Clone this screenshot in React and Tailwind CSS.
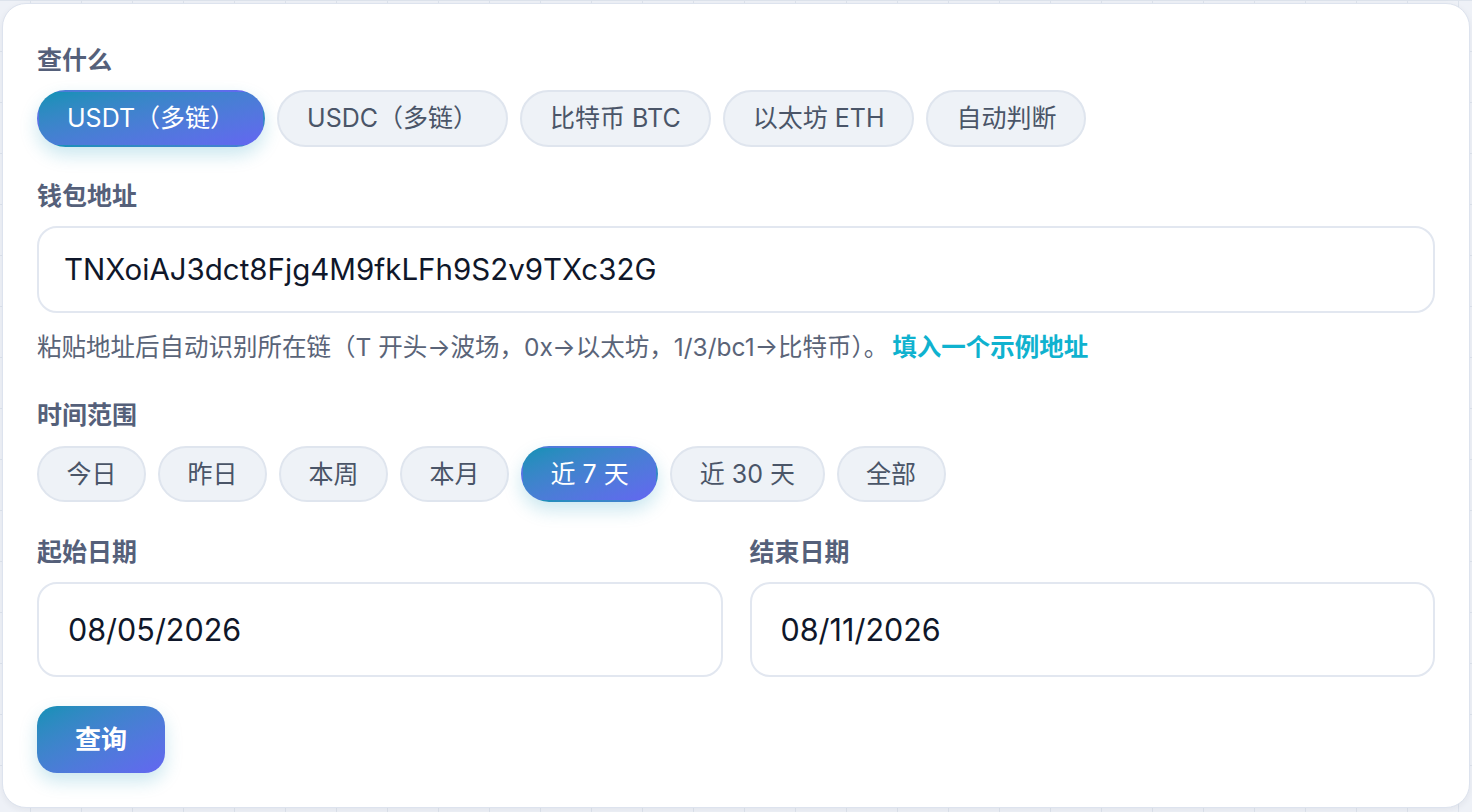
import React, { useState } from "react";

const FONT = "font-['Inter','Noto_Sans_CJK_SC',sans-serif]";

const assets = ["USDT（多链）", "USDC（多链）", "比特币 BTC", "以太坊 ETH", "自动判断"];
const ranges = ["今日", "昨日", "本周", "本月", "近 7 天", "近 30 天", "全部"];

function Pill({ active, children, tall }) {
  const base =
    "flex items-center justify-center rounded-full border-2 text-[25px] leading-none whitespace-nowrap " +
    (tall ? "h-[57px] px-[28px] " : "h-[56px] px-[27.5px] ");
  if (active) {
    return (
      <button
        className={
          base +
          "border-transparent text-white bg-gradient-to-br from-[#0e91b6] to-[#6366f1] shadow-[0_8px_18px_rgba(14,145,182,0.22)]"
        }
      >
        {children}
      </button>
    );
  }
  return (
    <button className={base + "border-[#dfe5ee] bg-[#eef2f7] text-[#4a5568]"}>
      {children}
    </button>
  );
}

function Label({ children, className = "" }) {
  return (
    <div className={"h-[32px] text-[25px] leading-[32px] font-semibold text-[#55607a] " + className}>
      {children}
    </div>
  );
}

export default function App() {
  const [asset, setAsset] = useState(0);
  const [range, setRange] = useState(4);

  return (
    <div
      className={
        FONT +
        " relative h-[812px] w-[1472px] overflow-hidden bg-[#eef1f7] bg-[linear-gradient(to_right,#dde3ec_1px,transparent_1px),linear-gradient(to_bottom,#dde3ec_1px,transparent_1px)] bg-[size:51px_51px] bg-[position:30px_0]"
      }
    >
      <div className="ml-[2px] mt-[3px] h-[805px] w-[1468px] rounded-[24px] border border-[#dde3ee] bg-white px-[34px] pt-[40px] shadow-[0_2px_6px_rgba(30,41,59,0.06)]">
        <Label>查什么</Label>
        <div className="mt-[14px] flex gap-[12px]">
          {assets.map((a, i) => (
            <div key={a} onClick={() => setAsset(i)}>
              <Pill active={i === asset} tall>
                {a}
              </Pill>
            </div>
          ))}
        </div>

        <Label className="mt-[33px]">钱包地址</Label>
        <div className="mt-[14px] flex h-[87px] items-center rounded-[20px] border-2 border-[#e2e7f0] px-[25px] text-[29.5px] text-[#0f172a]">
          TNXoiAJ3dct8Fjg4M9fkLFh9S2v9TXc32G
        </div>

        <div className="mt-[18px] h-[32px] text-[24.5px] leading-[32px] text-[#5a6478] whitespace-nowrap">
          粘贴地址后自动识别所在链（T 开头→波场，0x→以太坊，1/3/bc1→比特币）。
          <span className="ml-[4px] font-semibold text-[#0fb2cf]">填入一个示例地址</span>
        </div>

        <Label className="mt-[36px]">时间范围</Label>
        <div className="mt-[15px] flex gap-[12px]">
          {ranges.map((r, i) => (
            <div key={r} onClick={() => setRange(i)}>
              <Pill active={i === range}>{r}</Pill>
            </div>
          ))}
        </div>

        <div className="mt-[34px] grid grid-cols-2 gap-[27px]">
          <div>
            <Label>起始日期</Label>
            <div className="mt-[14px] flex h-[95px] items-center rounded-[20px] border-2 border-[#e2e7f0] px-[29px] text-[30.5px] text-[#0f172a]">
              08/05/2026
            </div>
          </div>
          <div>
            <Label>结束日期</Label>
            <div className="mt-[14px] flex h-[95px] items-center rounded-[20px] border-2 border-[#e2e7f0] px-[29px] text-[30.5px] text-[#0f172a]">
              08/11/2026
            </div>
          </div>
        </div>

        <button className="mt-[29px] flex h-[67px] w-[128px] items-center justify-center rounded-[20px] bg-gradient-to-br from-[#0e91b6] to-[#6366f1] text-[26px] font-bold text-white shadow-[0_8px_18px_rgba(14,145,182,0.22)]">
          查询
        </button>
      </div>
    </div>
  );
}
